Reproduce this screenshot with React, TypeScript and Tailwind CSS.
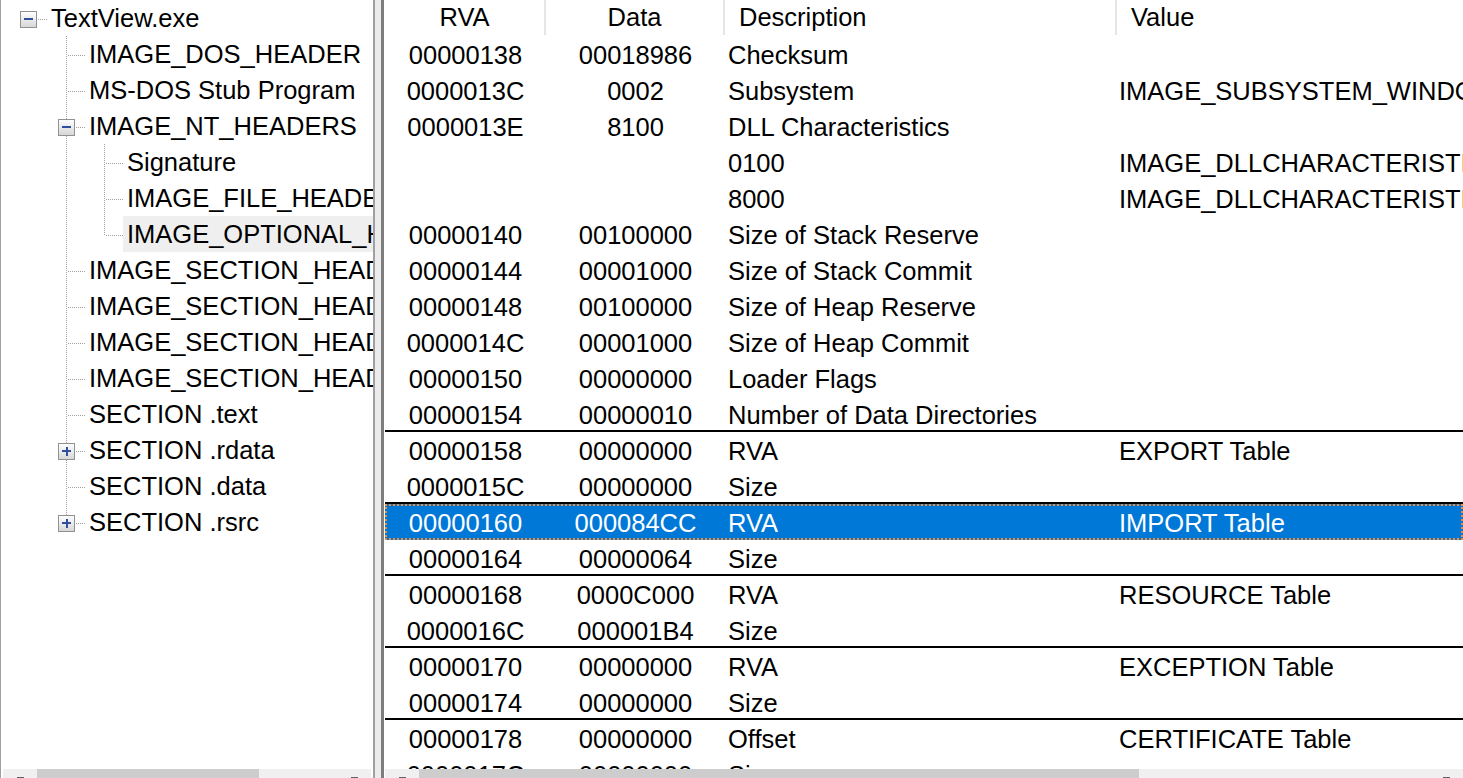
import React from 'react'

type CellKind = 'none' | 'pipe' | 'tee' | 'elbow' | 'root'
type Box = 'minus' | 'plus' | undefined

type TreeRow = { label: string; cells: CellKind[]; box?: Box; selected?: boolean }

const tree: TreeRow[] = [
  { label: 'TextView.exe', cells: ['root'], box: 'minus' },
  { label: 'IMAGE_DOS_HEADER', cells: ['none', 'tee'] },
  { label: 'MS-DOS Stub Program', cells: ['none', 'tee'] },
  { label: 'IMAGE_NT_HEADERS', cells: ['none', 'tee'], box: 'minus' },
  { label: 'Signature', cells: ['none', 'pipe', 'tee'] },
  { label: 'IMAGE_FILE_HEADER', cells: ['none', 'pipe', 'tee'] },
  { label: 'IMAGE_OPTIONAL_HEADER', cells: ['none', 'pipe', 'elbow'], selected: true },
  { label: 'IMAGE_SECTION_HEADER', cells: ['none', 'tee'] },
  { label: 'IMAGE_SECTION_HEADER', cells: ['none', 'tee'] },
  { label: 'IMAGE_SECTION_HEADER', cells: ['none', 'tee'] },
  { label: 'IMAGE_SECTION_HEADER', cells: ['none', 'tee'] },
  { label: 'SECTION .text', cells: ['none', 'tee'] },
  { label: 'SECTION .rdata', cells: ['none', 'tee'], box: 'plus' },
  { label: 'SECTION .data', cells: ['none', 'tee'] },
  { label: 'SECTION .rsrc', cells: ['none', 'elbow'], box: 'plus' },
]

type ListRow = { rva: string; data: string; desc: string; value?: string; sep?: boolean; selected?: boolean }

const rows: ListRow[] = [
  { rva: '00000138', data: '00018986', desc: 'Checksum' },
  { rva: '0000013C', data: '0002', desc: 'Subsystem', value: 'IMAGE_SUBSYSTEM_WINDOWS_GUI' },
  { rva: '0000013E', data: '8100', desc: 'DLL Characteristics' },
  { rva: '', data: '', desc: '0100', value: 'IMAGE_DLLCHARACTERISTICS_NX_COMPAT' },
  { rva: '', data: '', desc: '8000', value: 'IMAGE_DLLCHARACTERISTICS_TERMINAL_SERVER_AWARE' },
  { rva: '00000140', data: '00100000', desc: 'Size of Stack Reserve' },
  { rva: '00000144', data: '00001000', desc: 'Size of Stack Commit' },
  { rva: '00000148', data: '00100000', desc: 'Size of Heap Reserve' },
  { rva: '0000014C', data: '00001000', desc: 'Size of Heap Commit' },
  { rva: '00000150', data: '00000000', desc: 'Loader Flags' },
  { rva: '00000154', data: '00000010', desc: 'Number of Data Directories', sep: true },
  { rva: '00000158', data: '00000000', desc: 'RVA', value: 'EXPORT Table' },
  { rva: '0000015C', data: '00000000', desc: 'Size', sep: true },
  { rva: '00000160', data: '000084CC', desc: 'RVA', value: 'IMPORT Table', selected: true },
  { rva: '00000164', data: '00000064', desc: 'Size', sep: true },
  { rva: '00000168', data: '0000C000', desc: 'RVA', value: 'RESOURCE Table' },
  { rva: '0000016C', data: '000001B4', desc: 'Size', sep: true },
  { rva: '00000170', data: '00000000', desc: 'RVA', value: 'EXCEPTION Table' },
  { rva: '00000174', data: '00000000', desc: 'Size', sep: true },
  { rva: '00000178', data: '00000000', desc: 'Offset', value: 'CERTIFICATE Table' },
  { rva: '0000017C', data: '00000000', desc: 'Size' },
]

const dot = { stroke: '#a0a0a0', strokeDasharray: '1 1' }

function TreeCell({ kind, box, id }: { kind: CellKind; box?: Box; id: string }) {
  return (
    <svg width="38" height="36" className="shrink-0" shapeRendering="crispEdges">
      {(kind === 'pipe' || kind === 'tee') && <line x1="19.5" y1="0" x2="19.5" y2="36" {...dot} />}
      {kind === 'elbow' && <line x1="19.5" y1="0" x2="19.5" y2="20" {...dot} />}
      {(kind === 'tee' || kind === 'elbow' || kind === 'root') && (
        <line x1={box ? 29 : 21} y1="19.5" x2="38" y2="19.5" {...dot} />
      )}
      {box && (
        <g>
          <defs>
            <linearGradient id={id} x1="0" y1="0" x2="0" y2="1">
              <stop offset="0" stopColor="#ffffff" />
              <stop offset="1" stopColor="#d6d6d6" />
            </linearGradient>
          </defs>
          <rect x="11.5" y="11.5" width="16" height="16" fill={`url(#${id})`} stroke="#919191" />
          <rect x="15" y="18" width="9" height="2" fill="#2e4f9e" />
          {box === 'plus' && <rect x="18.5" y="15" width="2" height="9" fill="#2e4f9e" />}
        </g>
      )}
    </svg>
  )
}

function HScroll({ thumbLeft, thumbWidth }: { thumbLeft: number; thumbWidth: number }) {
  return (
    <div className="flex h-[34px] shrink-0 bg-[#f0f0f0]">
      <div className="flex w-[34px] shrink-0 justify-center">
        <div className="mt-[8px] h-[2px] w-[7px] bg-[#606060]" />
      </div>
      <div className="relative flex-1">
        <div className="h-full bg-[#cdcdcd]" style={{ marginLeft: thumbLeft, width: thumbWidth }} />
      </div>
      <div className="flex w-[34px] shrink-0 justify-center">
        <div className="mt-[8px] h-[2px] w-[7px] bg-[#606060]" />
      </div>
    </div>
  )
}

export default function App() {
  return (
    <div className="flex h-[778px] w-[1463px] overflow-hidden bg-white font-['Liberation_Sans',Arial,sans-serif] text-[25.5px] text-black">
      {/* Tree pane */}
      <div className="flex w-[373px] shrink-0 flex-col border-l border-[#a0a0a0]">
        <div className="h-[769px] shrink-0 overflow-hidden pl-[8px]">
          {tree.map((node, i) => (
            <div key={i} className="flex h-[36px] items-center whitespace-nowrap">
              {node.cells.map((c, j) => (
                <TreeCell
                  key={j}
                  kind={c}
                  box={j === node.cells.length - 1 ? node.box : undefined}
                  id={`g${i}-${j}`}
                />
              ))}
              <div className={`flex h-[36px] flex-1 items-center pl-[4px] ${node.selected ? 'bg-[#efefef]' : ''}`}>
                {node.label}
              </div>
            </div>
          ))}
        </div>
        <div className="mx-[2px]">
          <HScroll thumbLeft={0} thumbWidth={222} />
        </div>
      </div>

      {/* Splitter */}
      <div className="w-[2px] shrink-0 bg-[#a0a0a0]" />
      <div className="w-[6px] shrink-0 bg-[#ececec]" />
      <div className="w-[3px] shrink-0 bg-[#7d7d7d]" />

      {/* List pane */}
      <div className="flex min-w-0 flex-1 flex-col pl-px">
        <div className="h-[769px] shrink-0 overflow-hidden">
          <div className="grid h-[36px] grid-cols-[161px_179px_392px_1fr] whitespace-nowrap">
            <div className="flex h-[35px] items-center justify-center border-r-2 border-[#e5e5e5]">RVA</div>
            <div className="flex h-[35px] items-center justify-center border-r-2 border-[#e5e5e5]">Data</div>
            <div className="flex h-[35px] items-center border-r-2 border-[#e5e5e5] pl-[14px]">Description</div>
            <div className="flex h-[35px] items-center pl-[14px]">Value</div>
          </div>
          {rows.map((r, i) => (
            <div
              key={i}
              className={`grid h-[36px] grid-cols-[161px_179px_392px_1fr] items-center overflow-hidden whitespace-nowrap ${
                r.sep ? 'border-b-2 border-black' : ''
              } ${r.selected ? 'bg-[#0078d7] text-white outline-2 -outline-offset-2 outline-dotted outline-[#ff8728]' : ''}`}
            >
              <div className="text-center">{r.rva}</div>
              <div className="text-center">{r.data}</div>
              <div className="pl-[3px]">{r.desc}</div>
              <div className="pl-[2px]">{r.value}</div>
            </div>
          ))}
        </div>
        <HScroll thumbLeft={0} thumbWidth={720} />
      </div>
    </div>
  )
}
